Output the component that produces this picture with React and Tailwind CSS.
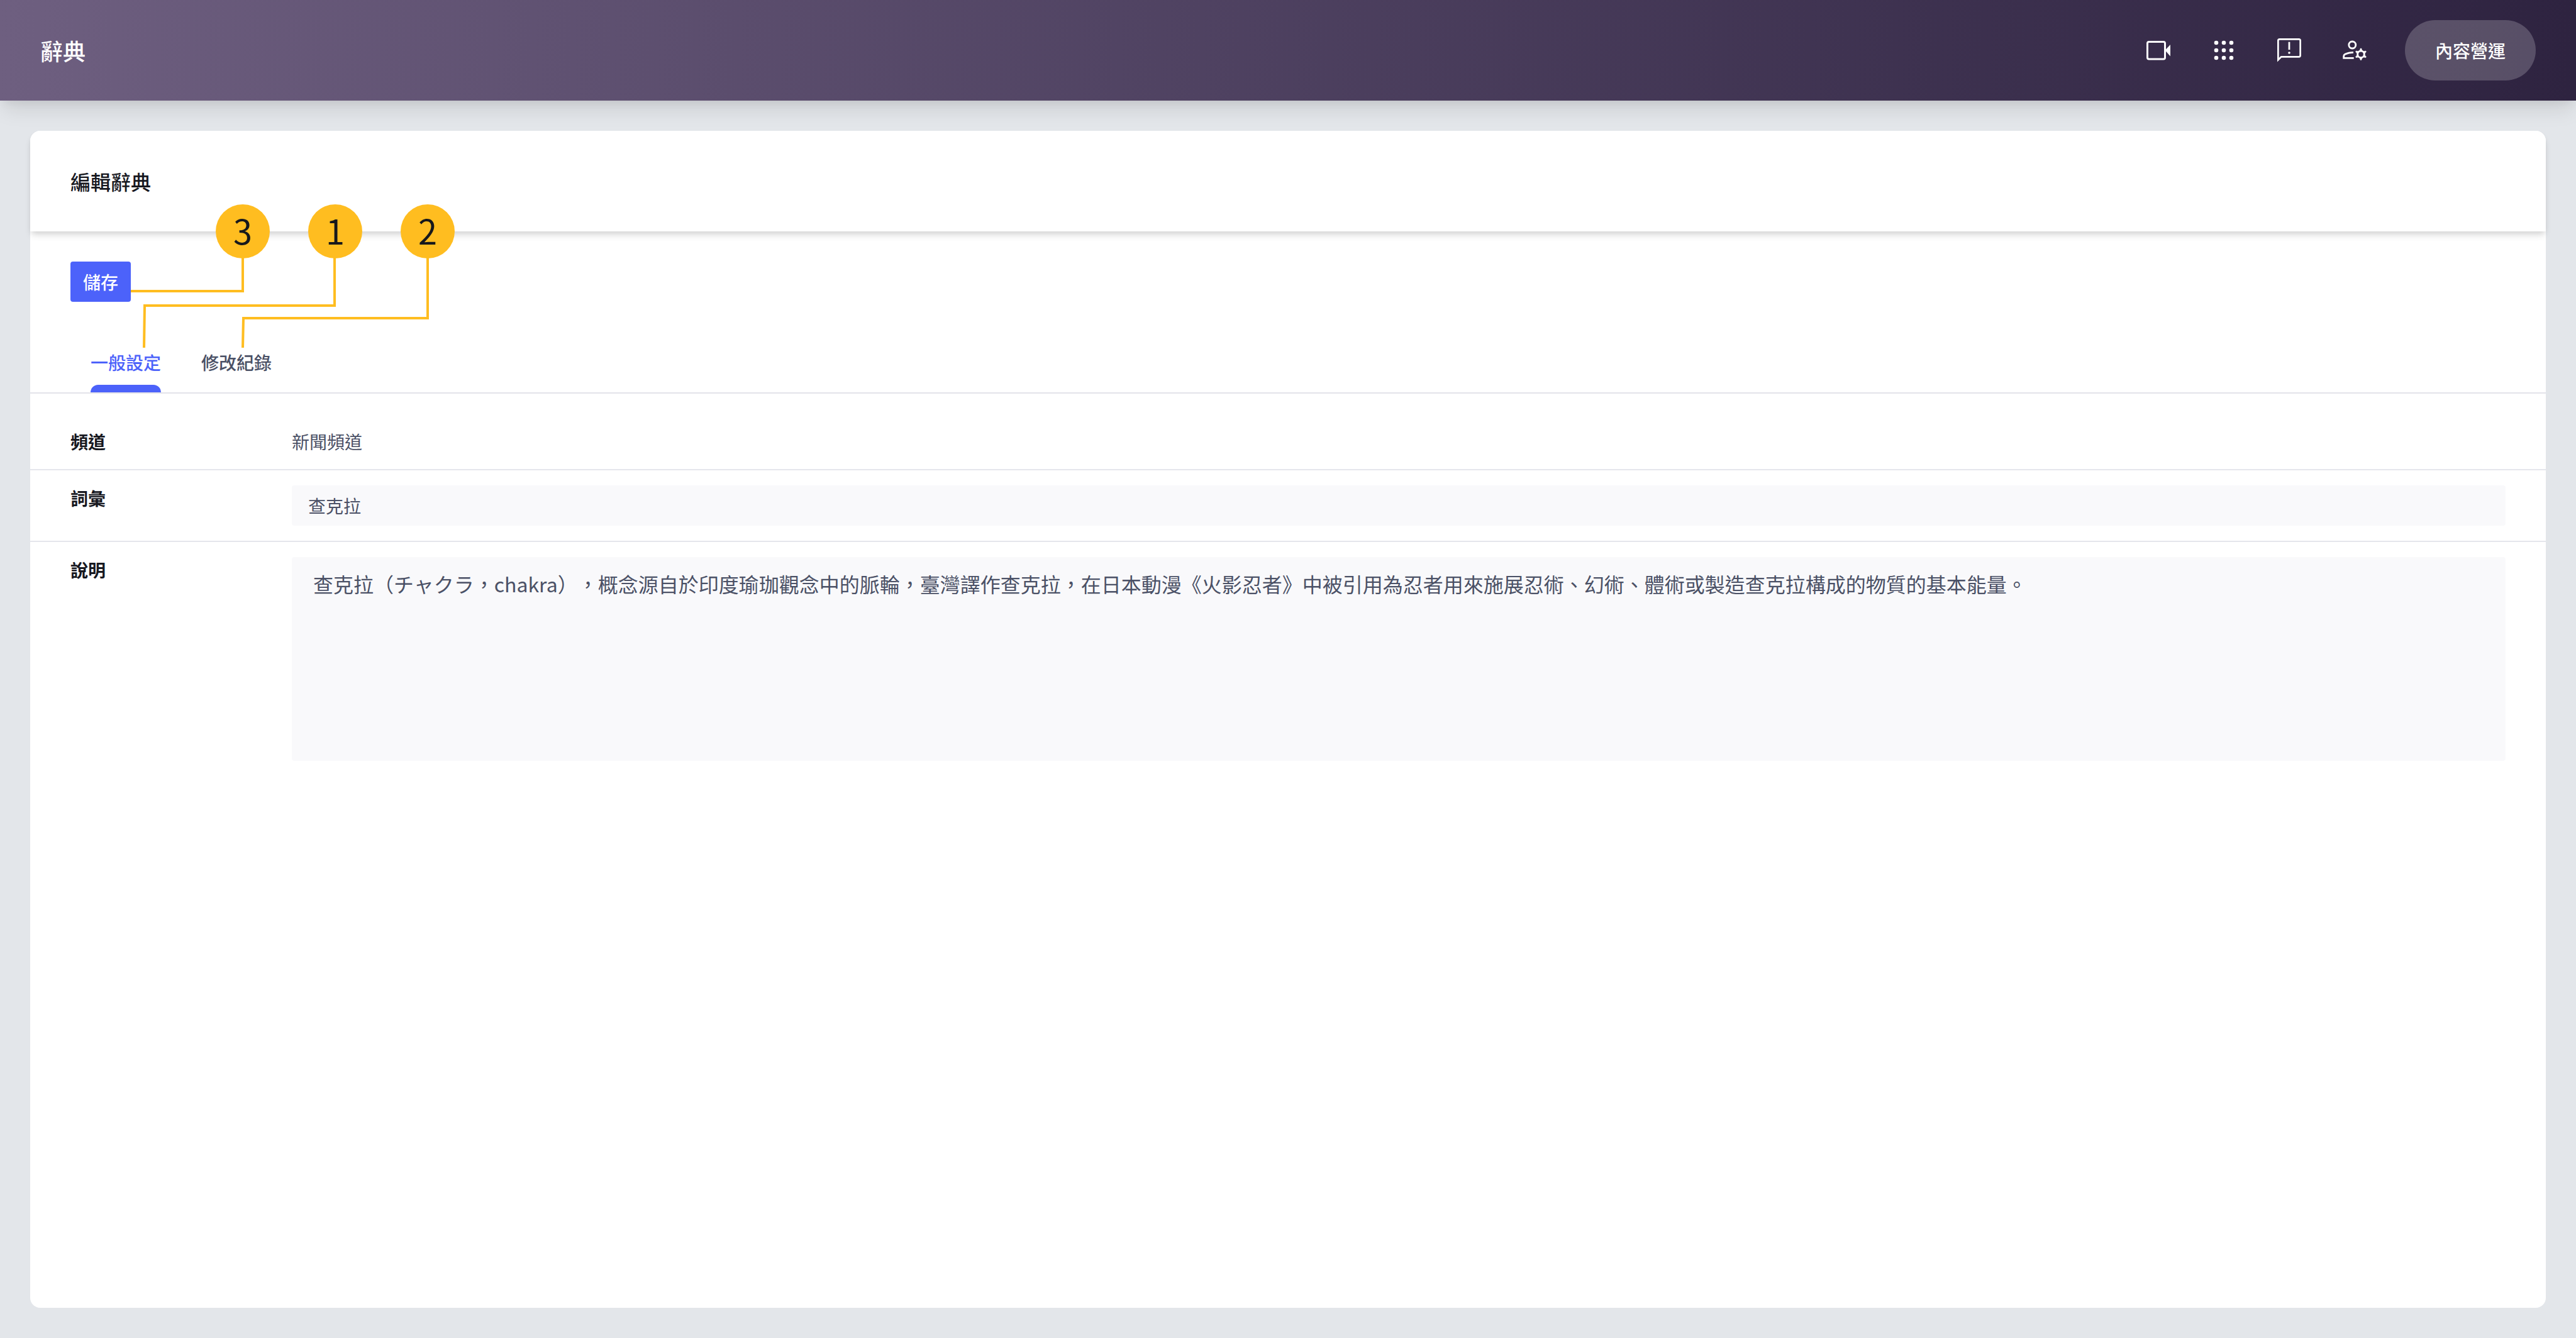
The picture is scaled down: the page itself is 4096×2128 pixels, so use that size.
function Icon({ children }) {
  return (
    <svg viewBox="0 0 48 48" className="size-12" fill="none" stroke="currentColor" aria-hidden="true">
      {children}
    </svg>
  );
}

function VideoIcon() {
  return (
    <Icon>
      <rect x="6.5" y="10.5" width="28" height="27.5" rx="2.5" strokeWidth="3" />
      <path d="M34.5 24L43 15V33.5Z" fill="currentColor" stroke="none" />
    </Icon>
  );
}

function AppsIcon() {
  return (
    <Icon>
      {[12, 24, 36].map((y) =>
        [12, 24, 36].map((x) => <circle key={`${x}-${y}`} cx={x} cy={y} r="3.3" fill="currentColor" stroke="none" />)
      )}
    </Icon>
  );
}

function FeedbackIcon() {
  return (
    <Icon>
      <g fill="currentColor" stroke="none">
        <path
          fillRule="evenodd"
          d="M5 42.5V8.6Q5 5 8.6 5H39.4Q43 5 43 8.6V32.1Q43 35.7 39.4 35.7H11.8ZM7.7 36L10.7 33H39.4Q40.3 33 40.3 32.1V8.6Q40.3 7.7 39.4 7.7H8.6Q7.7 7.7 7.7 8.6Z"
        />
        <rect x="22.6" y="10.7" width="2.8" height="12.4" />
        <circle cx="24" cy="28" r="1.8" />
      </g>
    </Icon>
  );
}

function ManageIcon() {
  return (
    <Icon>
      <g strokeWidth="2.8">
        <circle cx="20.3" cy="15.5" r="5.5" />
        <path d="M22 27.3C16 27.3 12 28.6 8.7 30.3Q6.7 31.4 6.7 33.5V36.3H22.7" />
        <circle cx="34" cy="30.3" r="5.3" />
      </g>
      {[0, 60, 120, 180, 240, 300].map((a) => (
        <path key={a} d="M32 24.8L33.2 21H34.8L36 24.8Z" transform={`rotate(${a} 34 30.3)`} fill="currentColor" strokeWidth="0.5" />
      ))}
    </Icon>
  );
}

function IconButton({ label, children }) {
  return (
    <button type="button" aria-label={label} className="flex size-20 items-center justify-center">
      {children}
    </button>
  );
}

function Marker({ children }) {
  return (
    <span className="flex size-[86px] items-center justify-center rounded-full bg-[#ffbd20] pb-1 text-[54px] leading-none text-[#17181c]">
      {children}
    </span>
  );
}

/* Numbered callouts laid over the card, pointing at the button and the tabs. */
function Callouts() {
  return (
    <div className="pointer-events-none absolute top-[117px] left-[160px] z-20">
      <svg width="520" height="240" className="absolute top-0 left-0" fill="none" stroke="#ffbd20" strokeWidth="4" aria-hidden="true">
        <path d="M178 43V138H0" />
        <path d="M324 43V161H22L21 228" />
        <path d="M472 43V181H179L178 228" />
      </svg>
      <div className="relative ml-[135px] flex gap-[61px]">
        <Marker>3</Marker>
        <Marker>1</Marker>
        <Marker>2</Marker>
      </div>
    </div>
  );
}

function Row({ label, htmlFor, last, children }) {
  return (
    <div className={`flex items-start px-16 py-6 ${last ? "" : "border-b-2 border-[#e5e6ec]"}`}>
      <label htmlFor={htmlFor} className="w-[352px] shrink-0 font-bold text-[#17181f]">
        {label}
      </label>
      {children}
    </div>
  );
}

export default function App() {
  return (
    <div
      lang="zh-Hant"
      className="flex min-h-screen flex-col bg-[#e3e6ea] font-['Noto_Sans_CJK_TC','Noto_Sans_CJK_JP',sans-serif] text-[28px] leading-10 text-[#4b5166]"
    >
      <header className="flex h-40 items-center justify-between bg-linear-to-r from-[#6e5f80] to-[#2e2340] px-16 text-white shadow-[0_20px_30px_-6px_rgba(0,0,0,0.1),0_8px_12px_-4px_rgba(0,0,0,0.05)]">
        <h1 className="text-[36px] font-medium leading-none">辭典</h1>
        <nav className="flex items-center gap-6">
          <IconButton label="影片">
            <VideoIcon />
          </IconButton>
          <IconButton label="應用程式">
            <AppsIcon />
          </IconButton>
          <IconButton label="意見回饋">
            <FeedbackIcon />
          </IconButton>
          <IconButton label="帳號管理">
            <ManageIcon />
          </IconButton>
          <button type="button" className="ml-4 h-24 rounded-full bg-white/20 px-12 font-medium">
            內容營運
          </button>
        </nav>
      </header>

      <main className="relative m-12 flex grow flex-col rounded-2xl bg-white">
        <div className="flex h-40 items-center rounded-t-2xl bg-white px-16 shadow-[0_8px_12px_-2px_rgba(0,0,0,0.12),0_4px_8px_-2px_rgba(0,0,0,0.08)]">
          <h2 className="text-[32px] font-medium text-[#17181f]">編輯辭典</h2>
        </div>
        <Callouts />

        <form onSubmit={(e) => e.preventDefault()}>
          <div className="px-16 pt-12">
            <button type="submit" className="h-16 rounded bg-[#4c62fa] px-5 font-medium text-white">
              儲存
            </button>
          </div>

          <div role="tablist" className="mt-8 flex gap-16 border-b-2 border-[#e3e3ea] px-24 font-medium">
            <button type="button" role="tab" aria-selected="true" className="flex h-28 flex-col justify-end text-[#4c62fa]">
              <span>一般設定</span>
              <span className="mt-4 h-3 w-full rounded-t-xl bg-[#4c62fa]" />
            </button>
            <button type="button" role="tab" aria-selected="false" className="flex h-28 flex-col justify-end pb-7">
              修改紀錄
            </button>
          </div>

          <div className="pt-8">
            <Row label="頻道" htmlFor="channel">
              <output id="channel">新聞頻道</output>
            </Row>
            <Row label="詞彙" htmlFor="term">
              <input id="term" defaultValue="查克拉" className="h-16 min-w-0 grow rounded bg-[#f9f9fb] px-[26px]" />
            </Row>
            <Row label="說明" htmlFor="description" last>
              <textarea
                id="description"
                defaultValue="查克拉（チャクラ，chakra），概念源自於印度瑜珈觀念中的脈輪，臺灣譯作查克拉，在日本動漫《火影忍者》中被引用為忍者用來施展忍術、幻術、體術或製造查克拉構成的物質的基本能量。"
                className="h-[324px] min-w-0 grow resize-none rounded bg-[#f9f9fb] px-[34px] py-5 text-[32px] leading-11 [text-spacing-trim:space-all]"
              />
            </Row>
          </div>
        </form>
      </main>
    </div>
  );
}
